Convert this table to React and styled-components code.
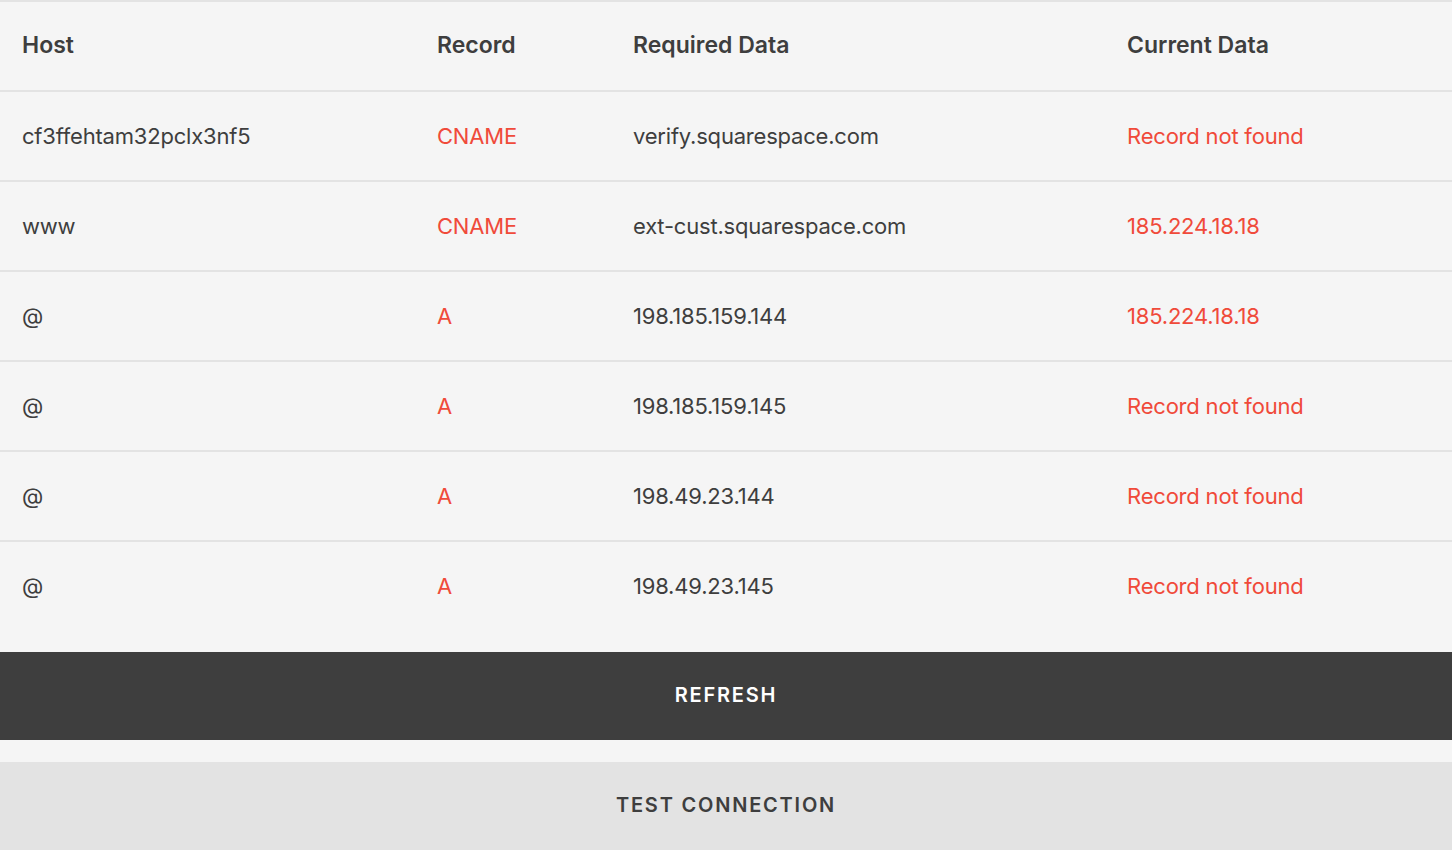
import React from "react";
import styled, { createGlobalStyle } from "styled-components";

const Global = createGlobalStyle`
  html, body { margin: 0; padding: 0; background: #f5f5f5; }
  body { font-family: Inter, "Noto Sans", sans-serif; color: #3e3e3e; }
`;

const Page = styled.div`
  background: #f5f5f5;
  border-top: 2px solid #e3e3e3;
`;

const Table = styled.div`
  padding-bottom: 22px;
`;

const Row = styled.div`
  display: grid;
  grid-template-columns: 415px 196px 494px 1fr;
  align-items: center;
  height: 88px;
  padding-left: 22px;
  border-bottom: ${(p) => (p.$last ? "none" : "2px solid #e3e3e3")};
`;

const HeadCell = styled.div`
  font-size: 23px;
  font-weight: 600;
  color: #3e3e3e;
  padding-bottom: 3px;
`;

const Cell = styled.div`
  font-size: 22px;
  font-weight: 400;
  color: ${(p) => (p.$red ? "#f04a3a" : "#3e3e3e")};
  letter-spacing: -0.2px;
`;

const Button = styled.button`
  display: flex;
  align-items: center;
  justify-content: center;
  width: 100%;
  height: 88px;
  border: none;
  margin: 0;
  padding: 0 0 3px;
  font-family: Inter, "Noto Sans", sans-serif;
  font-size: 20px;
  font-weight: 600;
  letter-spacing: 1.8px;
  text-transform: uppercase;
  cursor: pointer;
  background: ${(p) => (p.$dark ? "#3e3e3e" : "#e3e3e3")};
  color: ${(p) => (p.$dark ? "#ffffff" : "#3e3e3e")};
`;

const Spacer = styled.div`
  height: 22px;
`;

const rows = [
  ["cf3ffehtam32pclx3nf5", "CNAME", "verify.squarespace.com", "Record not found"],
  ["www", "CNAME", "ext-cust.squarespace.com", "185.224.18.18"],
  ["@", "A", "198.185.159.144", "185.224.18.18"],
  ["@", "A", "198.185.159.145", "Record not found"],
  ["@", "A", "198.49.23.144", "Record not found"],
  ["@", "A", "198.49.23.145", "Record not found"],
];

export default function App() {
  return (
    <Page>
      <Global />
      <Table>
        <Row>
          <HeadCell>Host</HeadCell>
          <HeadCell>Record</HeadCell>
          <HeadCell>Required Data</HeadCell>
          <HeadCell>Current Data</HeadCell>
        </Row>
        {rows.map((r, i) => (
          <Row key={i} $last={i === rows.length - 1}>
            <Cell>{r[0]}</Cell>
            <Cell $red>{r[1]}</Cell>
            <Cell>{r[2]}</Cell>
            <Cell $red>{r[3]}</Cell>
          </Row>
        ))}
      </Table>
      <Button $dark>Refresh</Button>
      <Spacer />
      <Button>Test Connection</Button>
    </Page>
  );
}
